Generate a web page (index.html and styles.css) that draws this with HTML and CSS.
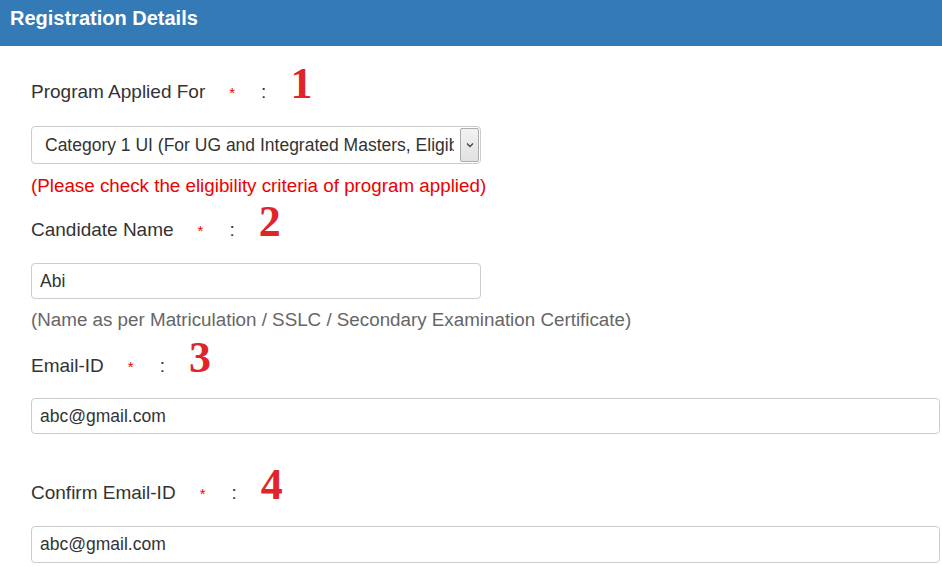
FILE: index.html
```html
<!DOCTYPE html>
<html lang="en">
<head>
    <meta charset="UTF-8">
    <meta name="viewport" content="width=device-width, initial-scale=1.0">
    <title>Registration Details</title>
    <link rel="stylesheet" href="styles.css">
</head>
<body>
    <div class="panel-heading">Registration Details</div>

    <div class="panel-body">
        <div class="form-group group-program">
            <div class="label-row">
                <span class="label-text">Program Applied For</span>
                <span class="req">*</span>
                <span class="colon">:</span>
                <span class="step">1</span>
            </div>
            <div class="select-wrap">
                <select class="form-control select-program">
                    <option>Category 1 UI (For UG and Integrated Masters, Eligible)</option>
                </select>
                <span class="select-arrow">
                    <svg width="8" height="6" viewBox="0 0 8 6"><path d="M1 1.5 L4 4.5 L7 1.5" fill="none" stroke="#444" stroke-width="1.3"/></svg>
                </span>
            </div>
            <div class="help-text error">(Please check the eligibility criteria of program applied)</div>
        </div>

        <div class="form-group group-name">
            <div class="label-row">
                <span class="label-text">Candidate Name</span>
                <span class="req">*</span>
                <span class="colon">:</span>
                <span class="step">2</span>
            </div>
            <input type="text" class="form-control input-half" value="Abi">
            <div class="help-text note">(Name as per Matriculation / SSLC / Secondary Examination Certificate)</div>
        </div>

        <div class="form-group group-email">
            <div class="label-row">
                <span class="label-text">Email-ID</span>
                <span class="req">*</span>
                <span class="colon">:</span>
                <span class="step">3</span>
            </div>
            <input type="text" class="form-control" value="abc@gmail.com">
        </div>

        <div class="form-group group-confirm">
            <div class="label-row">
                <span class="label-text">Confirm Email-ID</span>
                <span class="req">*</span>
                <span class="colon">:</span>
                <span class="step">4</span>
            </div>
            <input type="text" class="form-control input-tall" value="abc@gmail.com">
        </div>
    </div>
</body>
</html>
```

FILE: styles.css
```css
body {
    margin: 0;
    font-family: 'Liberation Sans', Arial, sans-serif;
    color: #333;
    background: #fff;
    overflow: hidden;
}

.panel-heading {
    height: 46px;
    box-sizing: border-box;
    padding: 8px 10px;
    background: #337ab7;
    color: #fff;
    font-size: 20px;
    font-weight: bold;
    line-height: 20px;
}

.panel-body {
    padding: 0 2px 0 31px;
}

.label-row {
    display: flex;
    align-items: baseline;
    height: 20px;
    font-size: 19px;
    line-height: 20px;
}

.req {
    margin-left: 24px;
    color: #e00;
    font-size: 15px;
}

.colon {
    margin-left: 26px;
}

.step {
    margin-left: 24px;
    font-family: 'Liberation Serif', 'Times New Roman', serif;
    font-weight: bold;
    font-size: 44px;
    line-height: 0;
    color: #e1242a;
}

.form-control {
    display: block;
    box-sizing: border-box;
    width: 100%;
    height: 36px;
    margin: 0;
    padding: 0 8px;
    border: 1px solid #ccc;
    border-radius: 4px;
    background: #fff;
    color: #333;
    font-family: 'Liberation Sans', Arial, sans-serif;
    font-size: 17.5px;
    outline: none;
}

.input-half {
    width: 450px;
}

.input-tall {
    height: 37px;
}

.select-wrap {
    position: relative;
    width: 450px;
}

.select-program {
    appearance: none;
    -webkit-appearance: none;
    height: 38px;
    padding: 0 26px 0 13px;
    color: #333;
}

.select-arrow {
    position: absolute;
    top: 2px;
    right: 2px;
    width: 19px;
    height: 34px;
    box-sizing: border-box;
    border: 1px solid #adadad;
    border-radius: 2px;
    background: linear-gradient(#f2f2f2, #e1e1e1);
    display: flex;
    justify-content: center;
    align-items: center;
    pointer-events: none;
}

.help-text {
    font-size: 18.8px;
    line-height: 20px;
}

.error {
    color: #e00;
    margin-top: 12px;
}

.note {
    color: #666;
    margin-top: 11px;
}

.group-program {
    padding-top: 36px;
}

.group-program .label-row {
    margin-bottom: 24px;
}

.group-name {
    padding-top: 24px;
}

.group-name .label-row {
    margin-bottom: 23px;
}

.group-email {
    padding-top: 26px;
}

.group-email .label-row {
    margin-bottom: 22px;
}

.group-confirm {
    padding-top: 49px;
}

.group-confirm .label-row {
    margin-bottom: 23px;
}
```
